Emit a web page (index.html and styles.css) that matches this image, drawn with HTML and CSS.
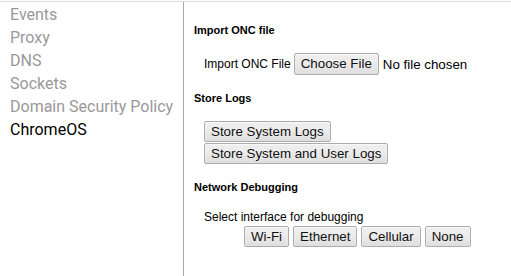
FILE: index.html
```html
<!DOCTYPE html>
<html>
<head>
    <title>net-internals</title>
    <meta charset="UTF-8">
    <link rel="stylesheet" href="styles.css">
</head>
<body>
    <div class="page">
        <div class="tabs">
            <div class="tab">Events</div>
            <div class="tab">Proxy</div>
            <div class="tab">DNS</div>
            <div class="tab">Sockets</div>
            <div class="tab">Domain Security Policy</div>
            <div class="tab selected">ChromeOS</div>
        </div>

        <div class="content">
            <div class="section">
                <h4>Import ONC file</h4>
                <div class="section-body">
                    <label class="onc-label">Import ONC File <input type="file" class="file-input"></label>
                </div>
            </div>

            <div class="section">
                <h4>Store Logs</h4>
                <div class="section-body log-buttons">
                    <button>Store System Logs</button>
                    <button>Store System and User Logs</button>
                </div>
            </div>

            <div class="section">
                <h4>Network Debugging</h4>
                <div class="section-body">
                    <div class="hint">Select interface for debugging</div>
                    <div class="debug-buttons">
                        <button>Wi-Fi</button>
                        <button>Ethernet</button>
                        <button>Cellular</button>
                        <button>None</button>
                    </div>
                </div>
            </div>
        </div>
    </div>
</body>
</html>
```

FILE: styles.css
```css
body {
    margin: 0;
    font-family: "Liberation Sans", Arial, sans-serif;
    color: #000;
    background: #fff;
    overflow: hidden;
}

.page {
    display: flex;
    margin-top: 1px;
    border-top: 1px solid #dedede;
    height: 274px;
}

.tabs {
    width: 183px;
    flex-shrink: 0;
    border-right: 1px solid #a8a8a8;
    padding-top: 1px;
}

.tab {
    font-family: Roboto, sans-serif;
    font-size: 16px;
    padding: 2px 10px;
    color: #999;
    white-space: nowrap;
}

.tab.selected {
    color: #000;
}

.content {
    flex: 1;
    min-width: 0;
    padding: 22px 0 0 10px;
}

h4 {
    font-size: 11px;
    font-weight: bold;
    margin: 0 0 16.5px 0;
}

.section {
    margin-bottom: 17.5px;
}

.section-body {
    padding-left: 10px;
}

.onc-label {
    display: flex;
    align-items: center;
    gap: 3px;
    font-size: 12px;
    white-space: nowrap;
}

button,
.file-input::file-selector-button {
    font-family: "Liberation Sans", Arial, sans-serif;
    font-size: 13.33px;
    color: #111;
    height: 21px;
    padding: 0 6px;
    border: 1px solid #acacac;
    border-radius: 2px;
    background: linear-gradient(#ededed, #ededed 38%, #dedede);
    box-shadow: inset 0 1px 2px rgba(255,255,255,0.75);
}

.file-input {
    width: 176px;
    font-family: "Liberation Sans", Arial, sans-serif;
    font-size: 13.33px;
    color: #000;
}

.file-input::file-selector-button {
    height: 22px;
    margin-right: 4px;
}

.log-buttons {
    display: flex;
    flex-direction: column;
    align-items: flex-start;
    gap: 1px;
}

.hint {
    font-size: 12px;
}

.debug-buttons {
    display: flex;
    gap: 4px;
    margin: 2px 0 0 40px;
}
```
